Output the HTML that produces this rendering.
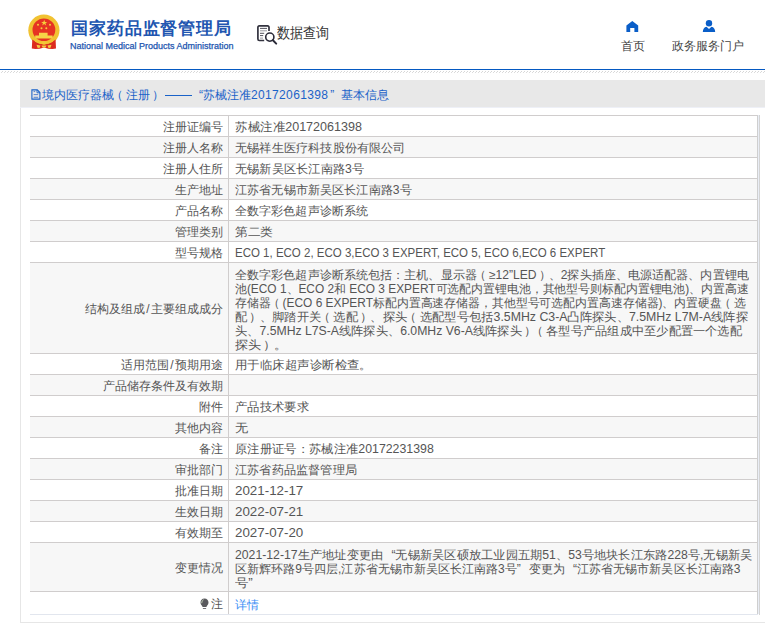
<!DOCTYPE html>
<html><head><meta charset="utf-8">
<style>
*{margin:0;padding:0;box-sizing:border-box}
html,body{width:765px;height:630px;overflow:hidden;background:#fff;font-family:"Liberation Sans",sans-serif;color:#555}
.abs{position:absolute}
#hdrline{position:absolute;left:0;top:69px;width:765px;height:1px;background:#0559c2}
#hatch{position:absolute;left:0;top:70px;width:765px;height:3px;background:repeating-linear-gradient(135deg,#fff 0,#fff 1.4px,#d9d9d9 1.4px,#d9d9d9 2.1px)}
#title{position:absolute;left:71px;top:18px;font-size:17px;letter-spacing:0.9px;font-weight:900;color:#2155b0;white-space:nowrap;line-height:22px}
#en{position:absolute;left:70px;top:39.5px;font-size:9px;color:#2155b0;white-space:nowrap;line-height:12px;-webkit-text-stroke:0.25px #2155b0;transform-origin:0 0}
#sj{position:absolute;left:277px;top:24px;font-size:14.8px;color:#333;white-space:nowrap;line-height:18px;transform:scaleX(0.87);transform-origin:0 0}
.nav{position:absolute;top:39px;font-size:12px;color:#444;white-space:nowrap;line-height:14px}
#box{position:absolute;left:20px;top:80px;width:760px;height:543px;border:1px solid #e6e6e6;border-top:none}
#bar{position:absolute;left:20px;top:80px;width:745px;height:28px;background:#e8e8e8;border-bottom:1px solid #eef0f7}
.bt{position:absolute;top:87px;font-size:12px;color:#1a62c8;white-space:nowrap;line-height:16px}
.row{position:absolute;left:30px;width:728px;border-top:1px solid #d0cdcd}
.row.g{background:#f7f7f7}
.lab{position:absolute;left:0;width:198px;top:0;bottom:0;padding:1px 5px 0 0;font-size:12px;line-height:14px;display:flex;align-items:center;justify-content:flex-end;white-space:nowrap}
.sl{margin:0 1.5px}
.val{position:absolute;left:198px;right:0;top:0;bottom:0;border-left:1px solid #d0cdcd;padding:4px 0 0 6px;font-size:12px;line-height:14px;white-space:nowrap}
.val.m{padding-top:5px}
.ln{transform-origin:0 0;height:14px;width:max-content}
.f{transform-origin:0 0}
.lt{display:inline-block;transform-origin:100% 0}
a.f{display:inline-block}
.pl{position:relative;left:-3px}
.pr{position:relative;left:2px}
.ql{display:inline-block;width:12px;text-align:right}
.qr{display:inline-block;width:12px;text-align:left}
#rb1{position:absolute;left:757px;top:115px;width:1px;height:499px;background:#cfcfcf}
#rb2{position:absolute;left:758px;top:115px;width:1px;height:499px;background:#e9edf5}
#rb3{position:absolute;left:759px;top:115px;width:1px;height:500px;background:#d4d4d4}
#bot{position:absolute;left:30px;top:614px;width:728px;height:1px;background:#e2e6ee}
a{color:#3a8ef5;text-decoration:none}
</style></head><body>
<!-- emblem -->
<svg class="abs" style="left:0;top:0" width="70" height="60" viewBox="0 0 70 60">
  <circle cx="43.9" cy="30.2" r="15.6" fill="#f1c232"/>
  <path d="M32.3 39.5 Q38 44 44 44.5 Q50 44 55.6 39.5 L56 48.6 Q50.5 49.6 44 47.4 Q37.5 49.6 31.8 48.6Z" fill="#dc2b1e"/>
  <circle cx="43.9" cy="29.8" r="11.4" fill="#e63323"/>
  <path d="M39 32.8 h8.6 v2.7 h-8.6z M35.2 35.5 h17.4 v3.1 h-17.4z" fill="#f6d447"/>
  <path d="M44.2 19.8 l.8 2.1 2.3 0 -1.85 1.4 .75 2.2 -2 -1.4 -2 1.4 .75 -2.2 -1.85 -1.4 2.3 0z" fill="#f5cf3c"/>
  <circle cx="38" cy="24.7" r="1" fill="#f5cf3c"/><circle cx="50" cy="24.7" r="1" fill="#f5cf3c"/>
  <circle cx="41.5" cy="28.2" r="1" fill="#f5cf3c"/><circle cx="46.3" cy="28.2" r="1" fill="#f5cf3c"/>
  <path d="M34.5 40 Q44 45.5 53.5 40 L52.8 41.8 Q44 46.8 35.2 41.8Z" fill="#f1c232"/>
  <ellipse cx="44" cy="42.8" rx="2.6" ry="1.8" fill="#f3c838"/>
  <path d="M36.5 44.8 L40.5 45.6 L39.5 48 L37.5 47.8Z M51.5 44.8 L47.5 45.6 L48.5 48 L50.5 47.8Z M41.5 45.6 L46.5 45.6 L45.5 47.4 L42.5 47.4Z" fill="#f4cc40"/>
</svg>
<div id="title" class="f">国家药品监督管理局</div>
<div id="en" class="f">National Medical Products Administration</div>
<!-- data query icon -->
<svg class="abs" style="left:256px;top:24px" width="22" height="22" viewBox="0 0 22 22">
  <path d="M13 6.9 V3.3 Q13 1.9 11.6 1.9 H3.3 Q1.9 1.9 1.9 3.3 V15.1 Q1.9 16.5 3.3 16.5 H8.2" fill="none" stroke="#33333f" stroke-width="1.7"/>
  <path d="M4 4.4h7M4 9.3h4.2M4 11.6h3.2" stroke="#3e3e4a" stroke-width="0.9"/>
  <path d="M4 6.8h7M4 14.1h3" stroke="#9a9aa2" stroke-width="1"/>
  <circle cx="13.8" cy="13.1" r="4.1" fill="#fff" stroke="#2a2a38" stroke-width="1.6"/>
  <path d="M16.9 16.3 L20.2 19.6" stroke="#2a2a38" stroke-width="2" stroke-linecap="round"/>
</svg>
<div id="sj" class="f">数据查询</div>
<!-- nav icons -->
<svg class="abs" style="left:626px;top:20px" width="13" height="13" viewBox="0 0 13 13">
  <path d="M6.3 1 L12.2 5.5 V12 H8.4 V8 H4.2 V12 H0.4 V5.5 Z" fill="#0a5ec8"/>
</svg>
<div class="nav f" style="left:620.5px">首页</div>
<svg class="abs" style="left:702px;top:19px" width="14" height="14" viewBox="0 0 14 14">
  <circle cx="7" cy="4.2" r="3.2" fill="#0a5ec8"/>
  <path d="M0.8 13 Q1 8.5 4.5 7.8 L7 10 L9.5 7.8 Q13 8.5 13.2 13Z" fill="#0a5ec8"/>
</svg>
<div class="nav f" style="left:672px;letter-spacing:0.1px">政务服务门户</div>
<div id="hdrline"></div>
<svg class="abs" style="left:0;top:70px" width="765" height="3"><defs><pattern id="hp" width="3" height="3" patternUnits="userSpaceOnUse"><rect x="2" y="1" width="1" height="1" fill="#d6d6d6"/><rect x="1" y="2" width="1" height="1" fill="#dcdcdc"/></pattern></defs><rect width="765" height="3" fill="url(#hp)"/></svg>

<div id="box"></div>
<div id="bar"></div>
<svg class="abs" style="left:31px;top:89px" width="10" height="11" viewBox="0 0 10 11">
  <path d="M0.9 0.9 H6.3 L8.9 3.5 V10.1 H0.9 Z" fill="none" stroke="#1a62c8" stroke-width="1.1"/>
  <path d="M6 1 V3.8 H8.8" fill="none" stroke="#1a62c8" stroke-width="0.9"/>
  <path d="M2.6 2.6h1.6M2.6 5.6h4.6M2.6 8.3h4.6" stroke="#4a78c8" stroke-width="0.9"/>
</svg>
<div class="bt f" style="left:42px">境内医疗器械<span class="pl">（</span>注册<span class="pr">）</span></div>
<div class="abs" style="left:165px;top:95px;width:27px;height:1px;background:#1a62c8"></div>
<div class="bt f" style="left:199px">“</div>
<div class="bt f" style="left:203px">苏械注准<span style="letter-spacing:0.35px">20172061398</span><span style="margin-left:2px">”</span></div>
<div class="bt f" style="left:341px">基本信息</div>

<div class="row" style="top:115px;height:21px"><div class="lab"><span class="f lt">注册证编号</span></div><div class="val"><div class="ln f" id="l0" style="transform:scaleX(1.0454)">苏械注准20172061398</div></div></div>
<div class="row g" style="top:136px;height:21px"><div class="lab"><span class="f lt">注册人名称</span></div><div class="val"><div class="ln f" id="l1" style="transform:scaleX(1.0159)">无锡祥生医疗科技股份有限公司</div></div></div>
<div class="row" style="top:157px;height:21px"><div class="lab"><span class="f lt">注册人住所</span></div><div class="val"><div class="ln f" id="l2" style="transform:scaleX(1.0194)">无锡新吴区长江南路3号</div></div></div>
<div class="row g" style="top:178px;height:21px"><div class="lab"><span class="f lt">生产地址</span></div><div class="val"><div class="ln f" id="l3" style="transform:scaleX(1.0116)">江苏省无锡市新吴区长江南路3号</div></div></div>
<div class="row" style="top:199px;height:21px"><div class="lab"><span class="f lt">产品名称</span></div><div class="val"><div class="ln f" id="l4" style="transform:scaleX(1.0077)">全数字彩色超声诊断系统</div></div></div>
<div class="row g" style="top:220px;height:21px"><div class="lab"><span class="f lt">管理类别</span></div><div class="val"><div class="ln f" id="l5" style="transform:scaleX(1.0606)">第二类</div></div></div>
<div class="row" style="top:241px;height:21px"><div class="lab"><span class="f lt">型号规格</span></div><div class="val"><div class="ln f" id="l6" style="transform:scaleX(0.9583)">ECO 1, ECO 2, ECO 3,ECO 3 EXPERT, ECO 5, ECO 6,ECO 6 EXPERT</div></div></div>
<div class="row g" style="top:262px;height:91px"><div class="lab"><span class="f lt">结构及组成<span class="sl">/</span>主要组成成分</span></div><div class="val m"><div class="ln f" id="l7" style="transform:scaleX(1.0075)">全数字彩色超声诊断系统包括：主机、显示器<span class="pl">（</span>≥12”LED<span class="pr">）</span>、2探头插座、电源适配器、内置锂电</div><div class="ln f" id="l8" style="transform:scaleX(0.9907)">池(ECO 1、ECO 2和 ECO 3 EXPERT可选配内置锂电池，其他型号则标配内置锂电池)、内置高速</div><div class="ln f" id="l9" style="transform:scaleX(0.9914)">存储器<span class="pl">（</span>(ECO 6 EXPERT标配内置高速存储器，其他型号可选配内置高速存储器)、内置硬盘<span class="pl">（</span>选</div><div class="ln f" id="l10" style="transform:scaleX(1.0260)">配<span class="pr">）</span>、脚踏开关<span class="pl">（</span>选配<span class="pr">）</span>、探头<span class="pl">（</span>选配型号包括3.5MHz C3-A凸阵探头、7.5MHz L7M-A线阵探</div><div class="ln f" id="l11" style="transform:scaleX(1.0192)">头、7.5MHz L7S-A线阵探头、6.0MHz V6-A线阵探头<span class="pr">）</span><span class="pl">（</span>各型号产品组成中至少配置一个选配</div><div class="ln f" id="l12" style="transform:scaleX(1.0917)">探头<span class="pr">）</span>。</div></div></div>
<div class="row" style="top:353px;height:21px"><div class="lab"><span class="f lt">适用范围<span class="sl">/</span>预期用途</span></div><div class="val"><div class="ln f" id="l13" style="transform:scaleX(1.0367)">用于临床超声诊断检查。</div></div></div>
<div class="row g" style="top:374px;height:21px"><div class="lab"><span class="f lt">产品储存条件及有效期</span></div><div class="val"></div></div>
<div class="row" style="top:395px;height:21px"><div class="lab"><span class="f lt">附件</span></div><div class="val"><div class="ln f" id="l14" style="transform:scaleX(1.0275)">产品技术要求</div></div></div>
<div class="row g" style="top:416px;height:21px"><div class="lab"><span class="f lt">其他内容</span></div><div class="val"><div class="ln f" id="l15" style="transform:scaleX(1.1000)">无</div></div></div>
<div class="row" style="top:437px;height:21px"><div class="lab"><span class="f lt">备注</span></div><div class="val"><div class="ln f" id="l16" style="transform:scaleX(1.0277)">原注册证号：苏械注准20172231398</div></div></div>
<div class="row g" style="top:458px;height:21px"><div class="lab"><span class="f lt">审批部门</span></div><div class="val"><div class="ln f" id="l17" style="transform:scaleX(1.0162)">江苏省药品监督管理局</div></div></div>
<div class="row" style="top:479px;height:21px"><div class="lab"><span class="f lt">批准日期</span></div><div class="val"><div class="ln f" id="l18" style="transform:scaleX(1.1119)">2021-12-17</div></div></div>
<div class="row g" style="top:500px;height:21px"><div class="lab"><span class="f lt">生效日期</span></div><div class="val"><div class="ln f" id="l19" style="transform:scaleX(1.1119)">2022-07-21</div></div></div>
<div class="row" style="top:521px;height:21px"><div class="lab"><span class="f lt">有效期至</span></div><div class="val"><div class="ln f" id="l20" style="transform:scaleX(1.1119)">2027-07-20</div></div></div>
<div class="row g" style="top:542px;height:49px"><div class="lab"><span class="f lt">变更情况</span></div><div class="val m"><div class="ln f" id="l21" style="transform:scaleX(1.0196)">2021-12-17生产地址变更由<span class="ql">“</span>无锡新吴区硕放工业园五期51、53号地块长江东路228号,无锡新吴</div><div class="ln f" id="l22" style="transform:scaleX(1.0042)">区新辉环路9号四层,江苏省无锡市新吴区长江南路3号<span class="qr">”</span>变更为<span class="ql">“</span>江苏省无锡市新吴区长江南路3</div><div class="ln f" id="l23" style="transform:scaleX(1.1143)">号<span class="qr">”</span></div></div></div>
<div class="row" style="top:591px;height:23px"><div class="lab" style="padding-top:2px"><svg width="9" height="12" viewBox="0 0 9 12" style="margin-right:2.5px"><path d="M4.5 0.4 C2 0.4 0.5 2.3 0.5 4.5 C0.5 6.3 1.7 7.3 2.3 8.3 L2.5 9.1 H6.5 L6.7 8.3 C7.3 7.3 8.5 6.3 8.5 4.5 C8.5 2.3 7 0.4 4.5 0.4Z" fill="#5a5a5e"/><path d="M2.9 10.2 H6.1 V11 H2.9Z" fill="#55555a"/><path d="M1.7 5.2 Q1.6 2.6 3.6 1.7" stroke="#c8d8c0" stroke-width=".9" fill="none"/></svg><span class="f lt">注</span></div><div class="val" style="padding-top:6px"><a class="f">详情</a></div></div>
<div id="bot"></div>
<div id="rb1"></div><div id="rb2"></div><div id="rb3"></div>
<script>(function(){var W=[161.109, 163.578, 52.2, 24, 72.609, 120, 4, 131.266, 48, 60, 126.934, 60, 170.671, 60, 129.145, 48, 176.714, 48, 133.016, 48, 38.182, 48, 370.248, 138.344, 513.794, 513.678, 510.71, 513.048, 506.941, 52.402, 102.344, 136.844, 120, 24, 73.98, 48, 13.2, 24, 198.78, 48, 121.944, 48, 68.26, 48, 68.26, 48, 68.26, 48, 517.399, 505.489, 26.743, 12, 24];var e=document.querySelectorAll(".f");if(e.length!==W.length)return;for(var i=0;i<e.length;i++){var el=e[i];el.style.transform="none";var w=el.getBoundingClientRect().width;if(w>0&&W[i]>0){el.style.transform="scaleX("+(W[i]/w).toFixed(5)+")";}}})();</script>
</body></html>
